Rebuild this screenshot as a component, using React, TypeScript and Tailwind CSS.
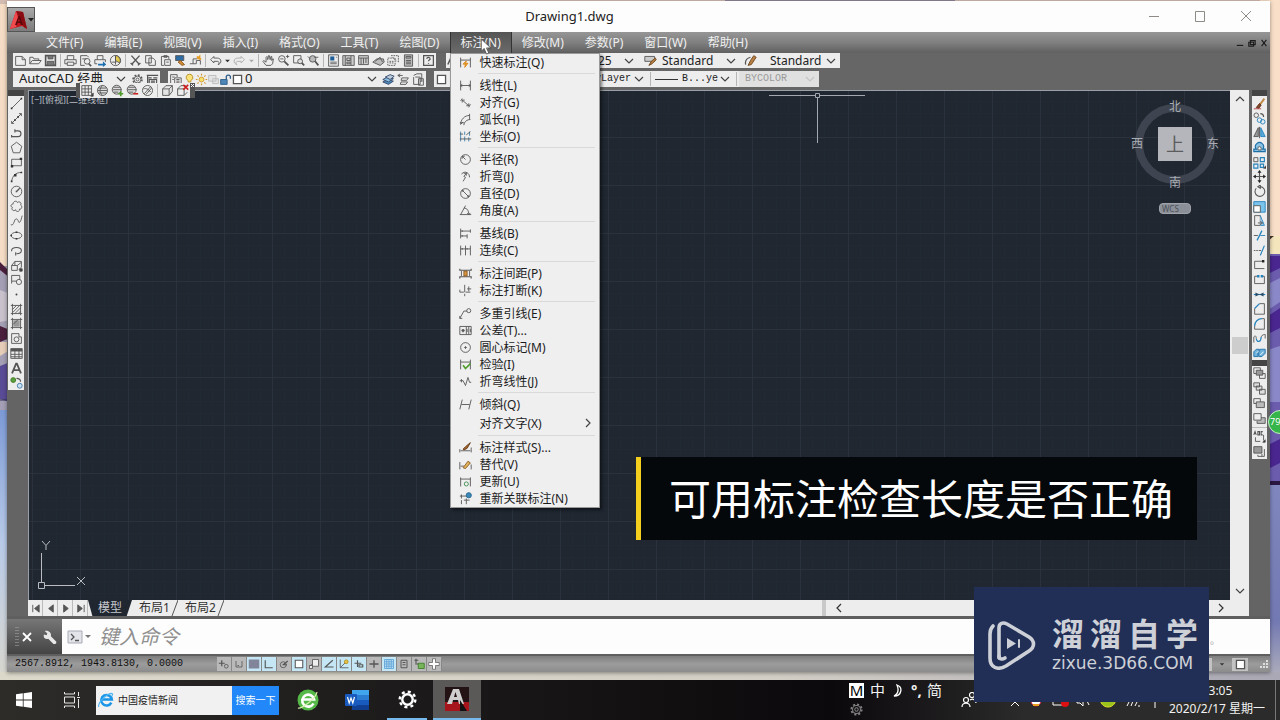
import React, { useState } from "react";

/* ---------- icon drawings, all on a 16 x 16 grid ---------- */

const drawings: Record<string, React.ReactNode> = {
  newFile: <path d="M2 3h8l4 4v7H2zM10 3v4h4" />,
  open: <path d="M1 12V4h4l1 2h6v2M1 12l3-4h11l-3 4z" />,
  save: (
    <>
      <path d="M2 2h12v12H2z" strokeWidth="2" />
      <path d="M5 2h6v4H5zM4 9h8v5H4z" fill="#777" />
    </>
  ),
  print: <path d="M4 7V2h8v5M4 12H1V7h14v5h-3M4 10h8v4H4z" />,
  preview: (
    <>
      <path d="M7 14H2V2h8l2 2M4 6h5" />
      <circle cx="10" cy="9" r="3.5" />
      <path d="M12 12l3 3" strokeWidth="2" />
    </>
  ),
  publish: (
    <>
      <path d="M4 7V2h7v5M4 12H1V7h13v3" />
      <path d="M5 12h6V9l4 4-4 3v-2H5z" fill="#1c6fb0" stroke="none" />
    </>
  ),
  dwf: (
    <>
      <circle cx="8" cy="8" r="6.3" />
      <path d="M8 8V2a6 6 0 0 1 5 9z" fill="#e2c94b" />
      <path d="M3 10h6M8 3v10" />
    </>
  ),
  cut: <path d="M3 2l9 10M13 2L4 12M2 11l3 3M11 14l3-3" strokeWidth="1.6" />,
  copy: <path d="M2 2h7v9H2zM6 5h5l3 3v6H6z" fill="#eee" />,
  paste: <path d="M3 3h9v3M3 3v11h3M6 2h4v2H6zM7 7h7v7H7zM9 10h3" />,
  matchProp: (
    <>
      <path d="M2 2h10v6H2z" fill="#2d6ca4" />
      <path d="M8 8l5 5-3 1-5-4z" fill="#d38b35" stroke="#8a5a1f" />
    </>
  ),
  block: (
    <>
      <path d="M1 12h8V8M5 12V6h5M9 8h5v5" />
      <path d="M10 3l1 2 2-2v3l2 0" stroke="#e39b22" strokeWidth="2" />
    </>
  ),
  undo: <path d="M6 3L2 7l4 4V9h4c3 0 3 3 1 4 5-1 5-8-1-8H6z" />,
  redo: <path d="M10 3l4 4-4 4V9H6c-3 0-3 3-1 4-5-1-5-8 1-8h4z" stroke="#aaa" />,
  tinyDown: <path d="M5 7h6l-3 3z" fill="#333" stroke="none" />,
  tinyDownOff: <path d="M5 7h6l-3 3z" fill="#aaa" stroke="none" />,
  pan: <path d="M5 14l-4-5 1-1 3 2V4l1-1 1 1v3l1-5h1l1 5 1-4h1v5l1-2h1l-1 6-2 2z" />,
  zoomRt: (
    <>
      <circle cx="6" cy="6" r="4" />
      <path d="M9 9l5 5" strokeWidth="2.2" />
      <path d="M11 3h4M13 1v4M4 6h4" />
    </>
  ),
  zoomWin: (
    <>
      <path d="M2 2h9v9H2z" />
      <circle cx="10" cy="9" r="3" fill="#ddd" />
      <path d="M12 11l3 3" strokeWidth="2.2" />
    </>
  ),
  zoomPrev: (
    <>
      <circle cx="7" cy="6" r="4" fill="#bbb" />
      <path d="M10 9l4 5" strokeWidth="2.2" />
      <path d="M1 3l3 3M9 4h5" />
    </>
  ),
  properties: (
    <>
      <path d="M2 1h12v14H2z" />
      <path d="M4 3h5v5H4z" fill="#1d5c96" stroke="none" />
      <path d="M4 10h8M4 12h8M11 4h1" />
    </>
  ),
  design: <path d="M1 2h14v12H1zM4 2v12M6 5h4v3H6zM11 2v12M6 10h4v2H6z" fill="#ccc" />,
  palette: <path d="M2 2h12v11H2zM2 5h12M5 5v8M8 5v7M11 5v6" fill="#ccc" />,
  sheet: <path d="M1 10l5-4h8l1 4-5 4zM4 9l6-5 3 6" fill="#bbb" />,
  markup: <path d="M1 5h9v9H1zM5 2h9v9M3 9h5M3 11h5M7 4l5 5" strokeDasharray="2 1" />,
  calc: (
    <>
      <path d="M3 1h10v14H3z" fill="#bbb" />
      <path d="M5 3h6v2H5zM5 8h6M5 10h6M5 12h6" />
    </>
  ),
  help: (
    <>
      <path d="M2 2h12v12H2z" strokeWidth="1.5" />
      <path d="M6 6c0-3 4-2 4 0 0 1-2 1-2 3M8 11v1" strokeWidth="1.5" />
    </>
  ),
  textStyle: <path d="M1 13L6 2l4 11M3 9h6M10 12l4-5" strokeWidth="1.8" />,
  dimBrush: (
    <>
      <path d="M1 3h12v6H1z" fill="#ccc" />
      <path d="M9 9l5-4 1 2-5 5-4 2z" fill="#b98045" stroke="#6b4318" />
    </>
  ),
  brush: (
    <>
      <path d="M8 8l4-6 3 2-4 6-2 3-4 1z" fill="#b98045" stroke="#6b4318" />
      <path d="M2 13c-1-5 2-8 6-9" strokeWidth="1.5" />
    </>
  ),
  gear: (
    <>
      <circle cx="8" cy="8" r="5.5" strokeWidth="2" strokeDasharray="2.2 2.1" />
      <circle cx="8" cy="8" r="4.2" />
      <circle cx="8" cy="8" r="1.8" />
    </>
  ),
  workspace: <path d="M1 3h14M3 6h4M9 6h5M4 8h9v6H4zM2 2v11M6 10h5M6 12h5" strokeWidth="1.5" />,
  layers: (
    <>
      <path d="M2 2h8v3M2 2v12h4M4 5h3M4 8h2" />
      <path d="M7 6h8v9H7zM9 8h4M9 10h4M9 12h4" />
    </>
  ),
  bulb: (
    <>
      <path d="M8 1.500a4 4 0 0 0-2 7.500l.5 2h3l.5-2a4 4 0 0 0-2-7.500z" fill="#fbe37a" stroke="#b58a1c" />
      <path d="M6.500 13h3M7 15h2" stroke="#666" />
    </>
  ),
  sun: (
    <>
      <circle cx="8" cy="8" r="3" fill="#f7e06a" stroke="#d1992b" />
      <path d="M8 1v2M8 13v2M1 8h2M13 8h2M3 3l1.500 1.500M11.500 11.500L13 13M3 13l1.500-1.500M11.500 4.500L13 3" stroke="#d1992b" strokeWidth="1.4" />
    </>
  ),
  vpFreeze: <path d="M2 3h9v7H2zM7 7h7v6H7z" stroke="#bbb" fill="#e4e4e4" />,
  unlock: (
    <>
      <path d="M9 8V4a3 3 0 0 1 5 0v3" stroke="#2f5d88" strokeWidth="1.6" />
      <path d="M2 8h8v6H2z" fill="#4b86b7" stroke="#2f5d88" />
    </>
  ),
  square: <path d="M3 3h10v10H3z" fill="#fff" strokeWidth="1.6" />,
  stack: (
    <>
      <path d="M1 11l6-3 7 2-6 4z" fill="#4f8fc0" stroke="#346" />
      <path d="M1 8l6-3 7 2-6 4z" fill="#8cc0e4" stroke="#346" />
      <path d="M4 5l6-3 5 2-5 4z" fill="#bcd" stroke="#346" />
    </>
  ),
  layerPrev: <path d="M1 3h6M4 1L1 3l3 2M6 6h8l-2 3H5zM5 11h8l-2 3H4z" />,
  layerState: <path d="M2 3l4-2h6v9M4 5h6v9H2V5M8 7h6v8H8zM10 10h3" />,
  cubeTable: (
    <>
      <path d="M1 2h12v12H1zM5 2v12M9 2v12M1 6h12M1 10h12" />
      <path d="M12 15h3v-4z" fill="#222" />
    </>
  ),
  sphere: (
    <>
      <circle cx="8" cy="8" r="6.200" fill="#ddd" />
      <path d="M2 8h12M3 5h10M3 11h10M8 2c-4 4-4 8 0 12" />
    </>
  ),
  spherePlus: (
    <>
      <circle cx="7" cy="7" r="5.500" fill="#ddd" />
      <path d="M2 7h11M3 4h8M3 10h6" />
      <path d="M12 9v6M9 12h6" stroke="#4c9a2a" strokeWidth="2" />
    </>
  ),
  sphereMinus: (
    <>
      <circle cx="7" cy="7" r="5.500" fill="#ddd" />
      <path d="M2 7h11M3 4h8M3 10h6" />
      <path d="M9 12h6" stroke="#c22" strokeWidth="2" />
    </>
  ),
  sphereEdit: (
    <>
      <circle cx="8" cy="8" r="6.200" />
      <path d="M4 12l8-9M6 13l7-8M3 6c3-1 6 0 9 4" />
    </>
  ),
  cube: <path d="M2 6l4-4h8v7l-4 5H2zM2 6h8l4-4M10 6v8" fill="#e4e4e4" />,
  cubeDelete: (
    <>
      <path d="M2 6l4-4h6M2 6v8h8l4-4M2 6h8v8M10 6l2-2" />
      <path d="M9 1l6 6M15 1L9 7" stroke="#c22" strokeWidth="2" />
    </>
  ),

  /* drawing tools */
  line: (
    <>
      <path d="M2 14L14 2" />
      <path d="M1 13h2v2H1zM13 1h2v2h-2z" fill="#333" stroke="none" />
    </>
  ),
  xline: (
    <>
      <path d="M2 14L14 2M2 11v3h3M11 2h3v3" />
      <path d="M5 9h2v2H5zM9 5h2v2H9z" fill="#333" stroke="none" />
    </>
  ),
  pline: <path d="M2 13h8a3.500 3.500 0 0 0 0-7H6M6 4v4M2 11v3" strokeWidth="1.4" />,
  polygon: <path d="M8 1.500l6.500 5-2.500 8H4l-2.500-8z" />,
  rect: (
    <>
      <path d="M2 4h12v8H2z" />
      <path d="M1 11h3v3H1zM12 2h3v3h-3z" fill="#333" stroke="none" />
    </>
  ),
  arc: (
    <>
      <path d="M2 14C3 7 7 3 14 3" />
      <path d="M1 13h2v2H1zM5 5h3v3H5zM13 2h2v2h-2z" fill="#333" stroke="none" />
    </>
  ),
  circle: (
    <>
      <circle cx="8" cy="8" r="6.500" />
      <path d="M8 8l4-4M7 8h2" strokeWidth="1.600" />
    </>
  ),
  revcloud: <path d="M4 5c-1-3 4-5 5-2 3-2 6 1 4 3 3 2 1 6-1 5 0 4-5 4-5 1-3 3-6-1-4-3-3-1-2-4 1-4z" />,
  spline: <path d="M1 13c4 3 4-8 7-7s2 6 4 4 2-5 3-8" />,
  ellipse: (
    <>
      <ellipse cx="8" cy="8" rx="6.500" ry="4" />
      <path d="M7 3h2v2H7zM0.500 7h2v2h-2zM7 11h2v2H7z" fill="#333" stroke="none" />
    </>
  ),
  ellipseArc: <path d="M2 8c0-5 12-5 12 0 0 3-3 4-6 4M7 10v4M2 7v2" strokeWidth="1.300" />,
  insertBlock: (
    <>
      <path d="M2 8l4-5h8v7l-3 3M2 8h7v6H2zM6 3v5M9 8l5-4" />
      <path d="M12 12h3v3h-3z" fill="#333" />
    </>
  ),
  makeBlock: (
    <>
      <path d="M2 3h10v7H2zM2 10v3" />
      <circle cx="11" cy="11" r="3.200" fill="#eee" />
    </>
  ),
  point: <circle cx="8" cy="8" r="1.200" fill="#444" stroke="none" />,
  hatch: <path d="M3 1v14M13 1v14M1 3h14M1 13h14M3 8l5-5M3 12l9-9M6 13l7-7M10 13l3-3" />,
  gradient: (
    <>
      <path d="M4 4h8v8H4z" fill="#999" stroke="none" />
      <path d="M3 1v14M13 1v14M1 3h14M1 13h14M4 9l6-6" />
    </>
  ),
  region: (
    <>
      <path d="M2 2h9v4h3v8H2z" />
      <circle cx="8" cy="9" r="3" />
    </>
  ),
  table: (
    <>
      <path d="M1 2h14v12H1zM1 9h14M1 12h14M6 2v12M11 2v12" />
      <path d="M1 2h14v3.500H1z" fill="#555" stroke="none" />
    </>
  ),
  mtext: <path d="M2.500 14L7.500 2h1l5 12M4.500 10h7" strokeWidth="2.200" />,
  addSelected: (
    <>
      <circle cx="4" cy="5" r="3" fill="#5c9e3d" stroke="#3c7a22" />
      <path d="M8 3c3 0 5 1 5 4" strokeWidth="1.400" />
      <circle cx="12" cy="12" r="3" fill="#cfe2f2" stroke="#3c79ad" />
    </>
  ),

  /* modify tools */
  erase: (
    <>
      <path d="M14 2L8 10" stroke="#c08846" strokeWidth="2.400" />
      <path d="M8 8l2 2-3 4-3-1z" fill="#8a4a2c" stroke="#5d2c18" />
      <path d="M1 14.500h9" stroke="#b44" />
    </>
  ),
  copyObj: (
    <>
      <circle cx="4" cy="4" r="2.800" />
      <path d="M9 2c3 0 4 1 4 4" strokeWidth="1.500" />
      <circle cx="8" cy="10" r="2.800" stroke="#2582bd" />
      <circle cx="12" cy="12" r="2.800" stroke="#2582bd" />
    </>
  ),
  mirror: (
    <>
      <path d="M6.500 2v11H1z" fill="#999" />
      <path d="M9.500 2v11H15z" fill="#57a8d8" stroke="#2582bd" />
      <path d="M8 1v14" />
    </>
  ),
  offset: (
    <>
      <path d="M1 13h14v-3h-3a5 5 0 1 0-8 0H1z" fill="#8ac2e4" stroke="#1d6fa8" strokeWidth="1.400" />
      <path d="M6 9a2 2 0 1 1 4 0v2H6z" fill="#fff" />
    </>
  ),
  array: (
    <>
      <path d="M1 2h5v5H1z" />
      <path d="M9 2h5v5H9zM1 10h5v5H1zM9 10h4v4H9z" stroke="#2582bd" strokeWidth="1.400" />
      <path d="M13 15h3v-3z" fill="#222" />
    </>
  ),
  move: (
    <>
      <path d="M8 2v12M2 8h12" strokeWidth="1.400" />
      <path d="M8 0l2.500 3.500h-5zM8 16l2.500-3.500h-5zM0 8l3.500-2.500v5zM16 8l-3.500-2.500v5z" fill="#222" stroke="none" />
    </>
  ),
  rotate: <path d="M9 2a6 6 0 1 1-5 2M9 0v4L6 2z" strokeWidth="1.300" />,
  scale: (
    <>
      <path d="M1 2h14v13H1z" fill="#7bc4ec" stroke="#2582bd" />
      <path d="M1 7h8v8H1z" fill="#fff" />
    </>
  ),
  stretch: (
    <>
      <path d="M2 2h7v12H2z" />
      <path d="M9 2l5 12H9" fill="#a8d4ef" stroke="#2582bd" />
      <path d="M6 11h5M9 9l3 2-3 2" />
    </>
  ),
  trim: (
    <>
      <path d="M1 8h5" />
      <path d="M9 8h6" stroke="#2582bd" />
      <path d="M11 2L5 14" stroke="#2582bd" strokeWidth="1.500" />
    </>
  ),
  extend: (
    <>
      <path d="M1 8h2M4 8h2M7 8h3" />
      <path d="M14 2L9 14" stroke="#2582bd" strokeWidth="1.500" />
    </>
  ),
  breakPt: (
    <>
      <path d="M13 4H2v9h12" />
      <path d="M11 2.500h3v3h-3z" fill="#222" stroke="none" />
    </>
  ),
  breakObj: (
    <>
      <path d="M5 4H2v9h12V4h-3" />
      <path d="M5 2.500h3v3H5zM9.500 2.500h3v3h-3z" fill="#2582bd" stroke="none" />
    </>
  ),
  join: (
    <>
      <path d="M1 8h14" stroke="#2582bd" strokeWidth="1.400" />
      <path d="M3 5.500L8 8l-5 2.500zM13 5.500L8 8l5 2.500z" fill="#2b4c66" stroke="none" />
    </>
  ),
  chamfer: (
    <>
      <path d="M2 8v7h12V2H8" />
      <path d="M2 8l6-6" stroke="#2582bd" strokeWidth="1.500" />
    </>
  ),
  fillet: (
    <>
      <path d="M2 11v4h12V2h-3" />
      <path d="M2 11c0-5 4-9 9-9" stroke="#2582bd" strokeWidth="1.500" />
    </>
  ),
  blend: (
    <>
      <path d="M1 13V6c2-2 3-1 3 2" />
      <path d="M4 8c1 6 6 4 6-2" stroke="#2582bd" strokeWidth="1.500" />
      <path d="M10 6c1-3 5-3 5-3v5" />
    </>
  ),
  explode: (
    <>
      <path d="M1 7l3-3h4l-2 4v5H1zM9 4h6v5l-4 4H7V8z" fill="#6fb2dc" stroke="#1d6fa8" />
      <path d="M4 9l3-3M9 11l4-4" stroke="#fff" />
    </>
  ),
  front: (
    <>
      <path d="M1 1h8v7H1zM8 8h7v6H8z" />
      <path d="M4 4h8v6H4z" fill="#999" />
    </>
  ),
  back: <path d="M4 5h7v5H4zM1 1h7v5H1zM8 9h7v6H8z" fill="#ddd" />,
  above: (
    <>
      <path d="M1 2h8v6H1z" />
      <path d="M4 6h10v7H4z" fill="#bbb" />
    </>
  ),
  under: (
    <>
      <path d="M7 7h8v7H5v-3" fill="#bbb" />
      <path d="M1 2h9v8H1z" fill="#eee" />
    </>
  ),
  textFront: (
    <>
      <path d="M1 6l1.500-4L4 6M6 2h2v4H6zM12 2h-2v4h2" strokeWidth="1.300" />
      <path d="M3 9v5h6M13 6v7" />
      <path d="M12 15h3v-3z" fill="#222" />
    </>
  ),
  hatchBack: (
    <>
      <path d="M1 2h10v8H1z" fill="#999" />
      <path d="M6 12v2h8V5M11 14v-3" />
    </>
  ),

  /* dimension menu */
  dQuick: (
    <>
      <path d="M2 2v12M14 2v12M2 5h12" />
      <path d="M9 6l-4 4h3l-1 4 4-5H8z" fill="#f0a52b" stroke="#d98512" />
    </>
  ),
  dLinear: <path d="M2 2v12M14 2v12M2 8h12M4 6.500L2 8l2 1.500M12 6.500L14 8l-2 1.500" />,
  dAligned: <path d="M4 3L2 6M4 5l8 7M14 10l-2 4M4 5v3M4 5h3M12 12V9M12 12H9" />,
  dArc: <path d="M2 14c0-6 5-11 11-11M6 15c0-4 4-7 8-7M1 12h5M13 1v7M2 14l3-3" />,
  dOrdinate: (
    <>
      <path d="M2 2v12M7 2v4M13 2v5M7 8v6M12 9v5" stroke="#3a7ca8" />
      <path d="M1 5h4M1 11h14M9 6l5-4" />
    </>
  ),
  dRadius: (
    <>
      <circle cx="8" cy="8" r="6" />
      <path d="M8 8L4 4M4 7V4h3" />
    </>
  ),
  dJog: <path d="M3 5c5-5 10-1 10 4M5 14l3-5-2-1 3-4M9 4L6 4M9 4v3" />,
  dDiameter: (
    <>
      <circle cx="8" cy="8" r="6" />
      <path d="M4 4l8 8M4 6V4h2M12 10v2h-2" />
    </>
  ),
  dAngular: <path d="M1 13h14M2 13L8 2M6 5c4 0 6 3 6 8M10 11l2 2 2-2" />,
  dBaseline: <path d="M2 2v12M2 5h12M14 3v4M2 11h8M10 9v5M4 4v2M4 10v2" />,
  dContinue: <path d="M2 2v12M8 2v12M14 2v12M2 6h12M4 5v2M10 5v2" />,
  dSpace: (
    <>
      <path d="M1 2v2h14V2M1 14v-2h14v2" strokeWidth="1.400" />
      <path d="M6 5h4v6H6z" fill="#d69345" stroke="#8a5a1f" />
      <path d="M3 5v6M13 5v6" />
    </>
  ),
  dBreak: <path d="M7 1v9M7 12v3M1 10h5M8 10h6M10 6h5M12 3v6M1 7v3" />,
  dLeader: (
    <>
      <circle cx="12" cy="4.500" r="2.500" />
      <path d="M1 14l5-9h4M1 11v3h3" />
    </>
  ),
  dTolerance: (
    <>
      <path d="M1 3h14v10H1zM9 3v10M12 3v10" />
      <path d="M3 8h4M5 6v4" strokeWidth="1.800" />
      <path d="M10 6v4M14 6v4" />
    </>
  ),
  dCenter: (
    <>
      <circle cx="8" cy="8" r="6" />
      <path d="M8 6.500v3M6.500 8h3" strokeWidth="1.300" />
    </>
  ),
  dInspect: (
    <>
      <path d="M2 2v12M14 2v12M2 5h12" />
      <path d="M5 9l3 4 6-6" stroke="#4f9d2d" strokeWidth="2" />
    </>
  ),
  dJogLine: <path d="M1 7h4l3 6 3-10 2 6h2M3 5v4" />,
  dOblique: <path d="M4 2L1 14M15 2l-3 12M3 8h10" />,
  dStyle: (
    <>
      <path d="M1 10v4M15 8v6M2 12h12" />
      <path d="M5 10l3-3 6-5-4 7-4 2z" fill="#a9662b" stroke="#5f3510" />
    </>
  ),
  dOverride: (
    <>
      <path d="M1 5v9M15 8v6M2 10h4" />
      <path d="M5 12l6-8 3 2-6 7z" fill="#e2b45b" stroke="#8a5a1f" />
    </>
  ),
  dUpdate: (
    <>
      <path d="M2 3v11M14 3v11M2 5h12" />
      <circle cx="9" cy="11" r="2.500" stroke="#3d8b50" />
    </>
  ),
  dReassoc: (
    <>
      <path d="M1 5h8M3 3v5M3 10v5M9 8v7M6 10h7" />
      <circle cx="12" cy="4" r="3.200" fill="#3d87b5" stroke="#25678f" />
    </>
  ),

  /* status toggles */
  infer: (
    <>
      <path d="M1 7h8M5 3v8" strokeWidth="1.600" />
      <circle cx="11" cy="11" r="2.500" />
    </>
  ),
  snap: <path d="M4 4v8h8V4M6 10h2" />,
  grid: <path d="M1 2h14v12H1z" fill="#82849a" stroke="none" />,
  ortho: <path d="M3 3v10h10" strokeWidth="1.500" />,
  polar: (
    <>
      <circle cx="7" cy="9" r="4" />
      <path d="M7 9l6-5M6 9h6" strokeWidth="1.500" />
    </>
  ),
  osnap: <path d="M3 3h10v10H3z" fill="#fff" strokeWidth="1.400" />,
  osnap3d: <path d="M6 2h8v9H6zM2 11l4-3M2 10v4h4v-4z" fill="#eee" />,
  otrack: <path d="M13 3L3 12h11" strokeWidth="1.500" />,
  ducs: (
    <>
      <path d="M3 2v11h11M3 13l7-7" />
      <circle cx="11" cy="5" r="2.500" fill="#e6c43f" stroke="#b58a1c" />
    </>
  ),
  dyn: <path d="M2 7h9M6 3v9M8 9h5v3H8z" strokeWidth="1.500" />,
  lwt: <path d="M2 8h12M8 3v10" strokeWidth="1.800" />,
  transparency: <path d="M2 2h12v12H2zM2 5h12M2 8h12M2 11h12M5 2v12M8 2v12M11 2v12" stroke="#5ba2d6" fill="#bfe0f5" />,
  quickProps: <path d="M4 3h8v10H4zM6 6h4M6 9h4" strokeWidth="1.300" />,
  cycling: (
    <>
      <path d="M2 3h5M4 1v6M3 8h5" strokeWidth="1.500" />
      <path d="M7 7h8v7H7z" fill="#76b65a" stroke="#3c7a22" />
    </>
  ),
  annotate: <path d="M6 1h4v5h5v4h-5v5H6v-5H1V6h5z" fill="#fff" stroke="#666" />,
};

function Icon({ name, className = "size-[13px]" }: { name: string; className?: string }) {
  return (
    <svg viewBox="0 0 16 16" fill="none" stroke="#555" strokeWidth="1.100" className={`shrink-0 ${className}`} aria-hidden="true">
      {drawings[name]}
    </svg>
  );
}

function Chevron({ className = "" }: { className?: string }) {
  return (
    <svg viewBox="0 0 10 10" fill="none" stroke="currentColor" strokeWidth="1.200" className={`size-2.5 shrink-0 ${className}`} aria-hidden="true">
      <path d="M1 3l4 4 4-4" />
    </svg>
  );
}

function ToolButton({ name, label, className = "w-[15px]" }: { name: string; label?: string; className?: string }) {
  return (
    <button type="button" aria-label={label ?? name} className={`flex items-center justify-center ${className}`}>
      <Icon name={name} />
    </button>
  );
}

const Divider = () => <span className="mx-0.5 my-px w-px bg-[#b5b5b5]" />;

function Dropdown({ label, value, className, disabled = false }: { label: string; value: string; className: string; disabled?: boolean }) {
  return (
    <label className={`flex items-center ${className} ${disabled ? "text-[#9a9a9a]" : "text-[#222]"}`}>
      <select aria-label={label} disabled={disabled} className="w-full min-w-0 appearance-none bg-transparent pr-3 outline-none">
        <option>{value}</option>
      </select>
      <Chevron className={disabled ? "-ml-2.5 text-[#c4c4c4]" : "-ml-2.5 text-[#444]"} />
    </label>
  );
}

/* ---------- data ---------- */

const menus = ["文件(F)", "编辑(E)", "视图(V)", "插入(I)", "格式(O)", "工具(T)", "绘图(D)", "标注(N)", "修改(M)", "参数(P)", "窗口(W)", "帮助(H)"];

const dimensionMenu: [string, string][][] = [
  [["dQuick", "快速标注(Q)"]],
  [["dLinear", "线性(L)"], ["dAligned", "对齐(G)"], ["dArc", "弧长(H)"], ["dOrdinate", "坐标(O)"]],
  [["dRadius", "半径(R)"], ["dJog", "折弯(J)"], ["dDiameter", "直径(D)"], ["dAngular", "角度(A)"]],
  [["dBaseline", "基线(B)"], ["dContinue", "连续(C)"]],
  [["dSpace", "标注间距(P)"], ["dBreak", "标注打断(K)"]],
  [["dLeader", "多重引线(E)"], ["dTolerance", "公差(T)..."], ["dCenter", "圆心标记(M)"], ["dInspect", "检验(I)"], ["dJogLine", "折弯线性(J)"]],
  [["dOblique", "倾斜(Q)"], ["", "对齐文字(X)"]],
  [["dStyle", "标注样式(S)..."], ["dOverride", "替代(V)"], ["dUpdate", "更新(U)"], ["dReassoc", "重新关联标注(N)"]],
];

const standardTools = [
  ["newFile", "open", "save"],
  ["print", "preview", "publish", "dwf"],
  ["cut", "copy", "paste", "matchProp", "block"],
  ["undo", "tinyDown", "redo", "tinyDownOff"],
  ["pan", "zoomRt", "zoomWin", "zoomPrev"],
  ["properties", "design", "palette", "sheet", "markup", "calc"],
  ["help"],
];

const drawTools = ["line", "xline", "pline", "polygon", "rect", "arc", "circle", "revcloud", "spline", "ellipse", "ellipseArc", "insertBlock", "makeBlock", "point", "hatch", "gradient", "region", "table", "mtext", "addSelected"];

const modifyTools = ["erase", "copyObj", "mirror", "offset", "array", "move", "rotate", "scale", "stretch", "trim", "extend", "breakPt", "breakObj", "join", "chamfer", "fillet", "blend", "explode"];

const toggles: [string, boolean][] = [
  ["infer", false], ["snap", false], ["grid", true], ["ortho", true], ["polar", false], ["osnap", true], ["osnap3d", false], ["otrack", true],
  ["ducs", true], ["dyn", true], ["lwt", false], ["transparency", true], ["quickProps", false], ["cycling", false], ["annotate", false],
];

/* ---------- window parts ---------- */

function Wallpaper() {
  return (
    <svg className="absolute inset-0 h-full w-full" viewBox="0 0 1280 720" preserveAspectRatio="none" aria-hidden="true">
      <defs>
        <linearGradient id="left" x1="0" y1="0" x2="0" y2="1">
          <stop offset="0" stopColor="#7d9ad6" />
          <stop offset="0.500" stopColor="#b9cbe8" />
          <stop offset="1" stopColor="#d9d7ce" />
        </linearGradient>
        <linearGradient id="right" x1="0" y1="0" x2="0" y2="1">
          <stop offset="0" stopColor="#7f87be" />
          <stop offset="0.700" stopColor="#7379b2" />
          <stop offset="1" stopColor="#b3b2bd" />
        </linearGradient>
        <linearGradient id="floor" x1="0" y1="0" x2="1" y2="0">
          <stop offset="0" stopColor="#dcd8ca" />
          <stop offset="0.600" stopColor="#d3cfc6" />
          <stop offset="1" stopColor="#a9a8b4" />
        </linearGradient>
      </defs>
      <rect width="1280" height="4" fill="#d2bcb2" />
      <path d="M725 0h230v4H725z" fill="#8e8594" />
      <rect y="4" width="20" height="262" fill="#f5dcc4" />
      <rect y="266" width="20" height="144" fill="#a49fb4" />
      <path d="M0 262l10 10v6l-10-8zM0 326l10 4v8l-10 4z" fill="#4a1f3c" />
      <path d="M0 290l10 4v26l-10 2z" fill="#c9c2cd" />
      <path d="M0 342h10v8l-10 6z" fill="#e6cdb8" />
      <path d="M0 366l10-4v40l-10-3z" fill="#5a4b96" />
      <path d="M0 400h8v10" fill="none" stroke="#2c3554" />
      <rect y="410" width="20" height="270" fill="url(#left)" />
      <rect x="1260" width="20" height="236" fill="#f9dfc8" />
      <rect x="1260" y="236" width="20" height="18" fill="#f4e5bd" />
      <path d="M1266 236h8l-6 5z" fill="#4a3530" />
      <rect x="1260" y="254" width="20" height="230" fill="#6b5cae" />
      <path d="M1268 256h12v12l-12 6zM1268 316l12-8v20l-12 6zM1268 445l12-6v24l-12 6z" fill="#4a2690" />
      <path d="M1268 284l12-6v24l-12 8zM1268 350l12-4v56h-12z" fill="#8a88c8" />
      <rect x="1260" y="484" width="20" height="196" fill="url(#right)" />
      <path d="M1268 481h12v4h-12z" fill="#2b1842" />
      <rect y="672" width="1280" height="10" fill="url(#floor)" />
    </svg>
  );
}

function TitleBar() {
  return (
    <header className="flex h-[31px] shrink-0 bg-[#fdfdfd]">
      <button type="button" aria-label="应用程序菜单" className="mt-1.5 flex w-7 items-center border border-[#555] bg-linear-to-b from-[#a9a9a9] to-[#7c7c7c] pl-0.5">
        <svg viewBox="0 0 18 20" className="h-5 w-[18px]" aria-hidden="true">
          <path d="M0 19L6 1l7 1 4 17-5-3z" fill="#c0151d" />
          <path d="M6 1l7 1 4 17-3-2z" fill="#8a0c13" />
          <path d="M0 19L6 1l2 7-2 9z" fill="#ef4b4f" />
          <path d="M5 15l3.500-9h1.500L13 15h-2.200l-.6-2H7.500L7 15zM8 11.500h1.800L9 8.500z" fill="#5c070b" />
        </svg>
        <svg viewBox="0 0 6 4" className="h-1 w-1.5" aria-hidden="true">
          <path d="M0 0h6L3 3.500z" fill="#222" />
        </svg>
      </button>
      <h1 className="flex-1 pr-[40px] pt-1.5 text-center text-[13px] leading-[19px] text-[#222]">Drawing1.dwg</h1>
      <div className="flex items-center gap-[26px] pr-3.5 text-[#8e8a86]">
        <button type="button" aria-label="最小化" className="size-5 p-1">
          <svg viewBox="0 0 12 12" fill="none" stroke="currentColor" className="size-3"><path d="M1 5.500h10" /></svg>
        </button>
        <button type="button" aria-label="最大化" className="size-5 p-1">
          <svg viewBox="0 0 12 12" fill="none" stroke="currentColor" className="size-3"><path d="M1.500 0.500h9v10h-9z" /></svg>
        </button>
        <button type="button" aria-label="关闭" className="size-5 p-1">
          <svg viewBox="0 0 12 12" fill="none" stroke="currentColor" className="size-3"><path d="M1 0l10 10M11 0L1 10" /></svg>
        </button>
      </div>
    </header>
  );
}

function DimensionMenu() {
  return (
    <ul role="menu" className="absolute left-0 top-full z-20 w-[150px] border border-[#9a9a9a] bg-[#efeff0] text-xs text-[#1c1c1c] shadow-[2px_2px_3px_rgba(0,0,0,0.5)]">
      {dimensionMenu.map((group, g) => (
        <li key={g} role="none">
          {g > 0 && <div className="my-0.5 ml-[27px] mr-1 h-0.5 border-t border-[#d9d9d9]" />}
          <ul role="none">
            {group.map(([icon, text]) => (
              <li key={text} role="none">
                <button type="button" role="menuitem" className={`flex w-full items-center gap-1.5 pl-2 pr-1.5 text-left leading-[17px] ${icon ? "h-[17px]" : "h-5"}`}>
                  <span className="flex w-3.5">{icon && <Icon name={icon} />}</span>
                  <span className="flex-1 whitespace-nowrap">{text}</span>
                  {!icon && <Chevron className="-rotate-90 text-[#444]" />}
                </button>
              </li>
            ))}
          </ul>
        </li>
      ))}
    </ul>
  );
}

function MenuBar() {
  return (
    <nav className="flex h-[21px] shrink-0 items-stretch bg-linear-to-b from-[#969696] via-[#808080] to-[#606060] pl-[29px] text-xs text-[#f0f0f0]">
      {menus.map((text) => {
        const open = text === "标注(N)";
        return (
          <div key={text} className="relative flex">
            <button type="button" aria-haspopup="menu" aria-expanded={open} className={`whitespace-nowrap border-x pl-[9px] pr-2.5 ${open ? "border-[#333] bg-linear-to-b from-[#555] to-[#6a6a6a]" : "border-transparent"}`}>
              {text}
            </button>
            {open && <DimensionMenu />}
            {open && (
              <svg viewBox="0 0 12 18" className="absolute left-[30px] top-1.5 z-30 h-[17px] w-3" aria-hidden="true">
                <path d="M1 1v13l3-3 2.500 6 2.500-1-2.500-5.500H11z" fill="#fff" stroke="#444" strokeWidth="0.800" />
              </svg>
            )}
          </div>
        );
      })}
      <div className="ml-auto flex items-center gap-1 pr-0.5">
        {["M1 8h8", "M3 2h6v5H3zM1 4h6v5H1z", "M2 1l6 8M8 1L2 9"].map((d, i) => (
          <button key={d} type="button" aria-label={["最小化图形", "还原图形", "关闭图形"][i]}>
            <svg viewBox="0 0 10 10" fill="none" stroke="#1b1b1b" strokeWidth="1.400" className="size-2"><path d={d} /></svg>
          </button>
        ))}
      </div>
    </nav>
  );
}

function Toolbars() {
  return (
    <div className="relative shrink-0 bg-[#666] pb-[3px] pl-1.5 text-xs text-[#222]">
      <div className="flex h-[18px] gap-2.5 overflow-hidden pb-[3px]">
        <div className="flex bg-[#ededed]">
          {standardTools.map((group, g) => (
            <React.Fragment key={g}>
              {g > 0 && <Divider />}
              {group.map((name) => (
                <ToolButton key={name} name={name} className={name.startsWith("tiny") ? "w-[9px]" : "w-[15px]"} />
              ))}
            </React.Fragment>
          ))}
        </div>
        <div className="flex bg-[#ededed]">
          <ToolButton name="textStyle" label="文字样式" />
          <Dropdown label="文字样式" value="Standard" className="w-[88px] pl-1 pr-1" />
          <ToolButton name="dimBrush" label="标注样式管理器" />
          <Dropdown label="标注样式" value="ISO-25" className="w-[76px] pl-2.5 pr-1.5" />
          <ToolButton name="dimBrush" label="表格样式管理器" className="w-5" />
          <Dropdown label="表格样式" value="Standard" className="w-20 pl-0.5 pr-1" />
          <ToolButton name="brush" label="多重引线样式管理器" className="w-5" />
          <Dropdown label="多重引线样式" value="Standard" className="w-20 pl-2.5 pr-1" />
        </div>
      </div>
      <div className="flex h-4 gap-2 overflow-hidden">
        <div className="flex bg-[#ededed]">
          <Dropdown label="工作空间" value="AutoCAD 经典" className="w-[117px] pl-1.5 pr-1 text-[13px]" />
          <ToolButton name="gear" label="工作空间设置" />
          <ToolButton name="workspace" label="我的工作空间" />
        </div>
        <div className="flex bg-[#ededed]">
          <ToolButton name="layers" label="图层特性管理器" />
          {["bulb", "sun", "vpFreeze", "unlock", "square"].map((name) => (
            <ToolButton key={name} name={name} className="w-3" />
          ))}
          <Dropdown label="图层" value="0" className="w-[138px] pl-0.5 pr-1 text-[13px]" />
          <ToolButton name="stack" label="将对象的图层设为当前" />
          <ToolButton name="layerPrev" label="上一个图层" />
          <ToolButton name="layerState" label="图层状态管理器" />
        </div>
        <div className="flex bg-[#ededed] font-['Liberation_Mono','Noto_Sans_CJK_SC',monospace] text-[10px]">
          <ToolButton name="square" label="颜色" />
          <Dropdown label="对象颜色" value="ByLayer" className="w-[84px] pl-0.5 pr-1" />
          <Divider />
          <span className="ml-1 mt-2 w-4 border-t border-[#333]" />
          <Dropdown label="线型" value="ByLayer" className="w-[90px] pl-[31px] pr-1" />
          <Divider />
          <span className="ml-0.5 mt-2 w-[23px] border-t border-[#333]" />
          <Dropdown label="线宽" value="B...ye" className="w-14 pl-1 pr-1" />
          <Divider />
          <Dropdown label="打印样式" value="BYCOLOR" disabled className="w-20 bg-[#e0e0e0] pl-1.5 pr-1" />
        </div>
      </div>
      <div className="absolute left-[69px] top-[30px] z-10 flex h-[15px] border-l-4 border-[#555] bg-[#ededed]">
        {["cubeTable", "sphere", "spherePlus", "sphereMinus", "sphereEdit"].map((name) => (
          <ToolButton key={name} name={name} />
        ))}
        <Divider />
        <ToolButton name="cube" />
        <ToolButton name="cubeDelete" />
        <button type="button" aria-label="关闭工具栏" className="flex h-full w-[5px] items-start bg-[#555]">
          <svg viewBox="0 0 5 5" fill="none" stroke="#fff" className="size-[5px]"><path d="M1 1l3 3M4 1L1 4" /></svg>
        </button>
      </div>
    </div>
  );
}

function ViewCube() {
  return (
    <div className="absolute right-[11px] top-2 flex w-[88px] flex-col items-center text-xs text-[#a9adb3]">
      <div className="relative flex h-[90px] w-full items-center justify-between">
        <svg viewBox="0 0 88 90" className="absolute inset-0 h-full w-full" aria-hidden="true">
          <circle cx="44" cy="45" r="36" fill="none" stroke="#3f4550" strokeWidth="8" />
        </svg>
        <span className="relative">西</span>
        <button type="button" className="relative size-[34px] bg-[#b4b6bb] text-lg text-[#5c5c5c]">上</button>
        <span className="relative">东</span>
        <span className="absolute inset-x-0 top-0 text-center leading-4">北</span>
        <span className="absolute inset-x-0 bottom-0 text-center leading-3">南</span>
      </div>
      <button type="button" className="mt-3.5 w-8 rounded-sm border border-[#a0a4aa] bg-[#8b9098] pl-0.5 text-left text-[8px] leading-[9px] text-[#4c5159]">WCS</button>
    </div>
  );
}

function Canvas() {
  return (
    <main className="relative min-w-0 flex-1 overflow-hidden border-l border-t border-[#9aa0a8] bg-[#202731] bg-[linear-gradient(to_right,#2a323d_1px,transparent_1px),linear-gradient(to_bottom,#2a323d_1px,transparent_1px),linear-gradient(to_right,#212933_1px,transparent_1px),linear-gradient(to_bottom,#212933_1px,transparent_1px)] bg-size-[48px_48px,48px_48px,12px_12px,12px_12px] bg-position-[3px_0,0_46px,3px_0,0_46px]">
      <p className="ml-0.5 mt-1 text-[9px] leading-[10px] text-[#b9bdc2]">[−][俯视][二维线框]</p>
      <svg viewBox="0 0 96 52" fill="none" stroke="#a3a8b0" className="absolute left-[740px] top-0 h-[52px] w-24" aria-hidden="true">
        <path d="M0 4.500h46M50 4.500h46M48.500 7v45M46.500 2.500h4v4h-4z" />
      </svg>
      <ViewCube />
      <svg viewBox="0 0 60 50" fill="none" stroke="#b9bdc2" className="absolute bottom-[9px] left-2 h-[50px] w-[60px]" aria-hidden="true">
        <path d="M4.500 12v30M7 44.500h31M1.500 41.500h6v6h-6zM5 0l4 4.500L13 0M9 4.500V9M40 36l8 8M48 36l-8 8" />
      </svg>
    </main>
  );
}

function LayoutTabs() {
  return (
    <div className="flex h-4 shrink-0 items-stretch bg-[#ededed] text-xs text-[#333]">
      {["M3 2v8M10 2v8L5 6z", "M9 2v8L4 6z", "M4 2v8l5-4z", "M10 2v8M3 2v8l5-4z"].map((d, i) => (
        <button key={d} type="button" aria-label={["第一个", "上一个", "下一个", "最后一个"][i]} className="flex w-[15px] items-center justify-center border-r border-[#bbb]">
          <svg viewBox="0 0 12 12" fill="#555" stroke="#555" className="size-[11px]"><path d={d} /></svg>
        </button>
      ))}
      <button type="button" className="w-11 bg-[#202731] leading-4 text-[#c6c9cd] [clip-path:polygon(0_0,100%_0,88%_100%,10%_100%)]">模型</button>
      {["布局1", "布局2"].map((text) => (
        <button key={text} type="button" className="flex w-[46px] items-center justify-between pl-[7px] leading-4">
          {text}
          <svg viewBox="0 0 7 16" fill="none" stroke="#555" className="h-4 w-[7px]"><path d="M7 0L1 16" /></svg>
        </button>
      ))}
      <div className="flex min-w-0 flex-1 justify-end">
        <div className="flex w-[408px] items-center justify-between border-l-4 border-[#c9c9c9] pl-2 pr-1 text-[#333]">
          <button type="button" aria-label="向左滚动"><Chevron className="rotate-90" /></button>
          <button type="button" aria-label="向右滚动"><Chevron className="-rotate-90" /></button>
        </div>
        <span className="w-[19px]" />
      </div>
    </div>
  );
}

function WorkArea() {
  return (
    <div className="flex min-h-0 flex-1 bg-[#646464]">
      <aside className="flex w-[21px] shrink-0 flex-col pl-px pr-1">
        <span className="h-1.5 bg-[#444]" />
        <div className="flex h-[294px] flex-col bg-[#ededed]">
          {drawTools.map((name) => (
            <ToolButton key={name} name={name} className="min-h-0 w-full flex-1" />
          ))}
        </div>
      </aside>
      <div className="flex min-w-0 flex-1 flex-col">
        <div className="flex min-h-0 flex-1">
          <Canvas />
          <div className="flex w-[19px] shrink-0 flex-col items-center bg-[#ededed] py-1 text-[#444]">
            <button type="button" aria-label="向上滚动"><Chevron className="rotate-180" /></button>
            <span className="flex-1" />
            <span className="h-[17px] w-4 bg-[#cdcdcd]" />
            <span className="flex-1" />
            <button type="button" aria-label="向下滚动"><Chevron /></button>
          </div>
        </div>
        <LayoutTabs />
      </div>
      <aside className="flex w-[21px] shrink-0 flex-col pl-[3px] pr-[3px]">
        <span className="h-1.5 bg-[#444]" />
        <div className="flex h-[264px] flex-col bg-[#ededed]">
          {modifyTools.map((name) => (
            <ToolButton key={name} name={name} className="min-h-0 w-full flex-1" />
          ))}
        </div>
        <span className="h-1.5 bg-[#444]" />
        <div className="flex flex-col bg-[#ededed]">
          {["front", "back", "above", "under"].map((name) => (
            <ToolButton key={name} name={name} className="h-[15px] w-full" />
          ))}
          <span className="my-px h-px bg-[#bbb]" />
          {["textFront", "hatchBack"].map((name) => (
            <ToolButton key={name} name={name} className="h-[15px] w-full" />
          ))}
        </div>
      </aside>
    </div>
  );
}

function CommandLine() {
  const [command, setCommand] = useState("");
  return (
    <div className="flex h-10 shrink-0 bg-[#5f5f5f] pb-0.5 pt-[3px]">
      <div className="flex w-[55px] shrink-0 items-center bg-linear-to-b from-[#777] to-[#444] pl-2">
        <svg viewBox="0 0 4 20" className="h-5 w-1" aria-hidden="true"><path d="M1 0v20M3 0v20" stroke="#aaa" strokeDasharray="1 2" /></svg>
        <button type="button" aria-label="关闭命令行" className="ml-0.5">
          <svg viewBox="0 0 12 12" stroke="#fff" strokeWidth="1.800" className="size-3"><path d="M2 2l8 8M10 2l-8 8" /></svg>
        </button>
        <button type="button" aria-label="自定义" className="ml-2.5">
          <svg viewBox="0 0 16 16" className="size-3.5"><path d="M2 1l3 3-1 2-3-1c-1 4 2 6 5 5l6 6c2 1 4-1 3-3L9 7c1-4-3-7-7-6z" fill="#e9e9e9" /></svg>
        </button>
      </div>
      <label className="flex flex-1 items-center bg-[#fdfdfd] pl-[5px]">
        <svg viewBox="0 0 16 16" fill="none" className="size-4" aria-hidden="true">
          <path d="M1 2h14v12H1z" fill="#e3e4ea" stroke="#a9abb5" />
          <path d="M4 5l3 3-3 3M8 11.500h4" stroke="#555" strokeWidth="1.300" />
        </svg>
        <svg viewBox="0 0 6 4" className="ml-0.5 h-1 w-1.5" aria-hidden="true"><path d="M0 0h6L3 3z" fill="#777" /></svg>
        <input
          aria-label="命令"
          value={command}
          onChange={(e) => setCommand(e.target.value)}
          placeholder="键入命令"
          className="ml-2 min-w-0 flex-1 bg-transparent text-xl italic outline-none placeholder:text-[#8f8f8f]"
        />
        <span className="pr-[50px] pt-2 text-[10px] text-[#999]">。</span>
      </label>
    </div>
  );
}

function StatusBar() {
  return (
    <footer className="flex h-4 shrink-0 items-center bg-linear-to-b from-[#7e7e7e] via-[#9c9c9c] to-[#8c8c8c] pl-2">
      <output className="w-[202px] whitespace-pre font-['Liberation_Mono',monospace] text-[10px] leading-4 text-[#111]">2567.8912, 1943.8130, 0.0000</output>
      {toggles.map(([name, on]) => (
        <button key={name} type="button" aria-label={name} aria-pressed={on} className={`flex h-3.5 w-[15px] items-center justify-center border-r border-[#888] ${on ? "bg-[#c4e6f5]" : "bg-[#b9b9b9]"}`}>
          <Icon name={name} className="size-3" />
        </button>
      ))}
      <div className="ml-auto flex items-center gap-1 pr-0.5">
        <button type="button" aria-label="隔离对象" className="flex w-4 justify-center bg-[#c2c2c2]"><Icon name="bulb" /></button>
        <Icon name="tinyDown" className="size-3" />
        <button type="button" aria-label="全屏显示" className="flex w-4 justify-center bg-[#c2c2c2]"><Icon name="square" /></button>
        <svg viewBox="0 0 8 8" className="ml-2 size-2" aria-hidden="true"><path d="M6 0h2v2H6zM3 3h2v2H3zM6 3h2v2H6zM0 6h2v2H0zM3 6h2v2H3zM6 6h2v2H6z" fill="#ddd" /></svg>
      </div>
    </footer>
  );
}

function Taskbar() {
  return (
    <footer className="relative flex h-10 shrink-0 items-center bg-linear-to-r from-[#2e2c29] via-[#0c090c] via-65% to-[#2b2b2b] to-80% text-[#f2f2f2]">
      <button type="button" aria-label="开始" className="ml-4">
        <svg viewBox="0 0 16 16" fill="#fff" className="size-4"><path d="M0 2.200L6.800 1.300v6.300H0zM7.600 1.200L16 0v7.600H7.600zM0 8.400h6.800v6.300L0 13.800zM7.600 8.400H16V16l-8.400-1.200z" /></svg>
      </button>
      <button type="button" aria-label="任务视图" className="ml-8">
        <svg viewBox="0 0 16 16" fill="none" stroke="#e8e8e8" className="size-4"><path d="M0.500 0v2h10V0M0.500 5h10v6H0.500zM0.500 16v-2h10v2M14.500 0v4M14.500 7v9M13 5.500h3" /></svg>
      </button>
      <form className="ml-4 flex h-[29px]" onSubmit={(e) => e.preventDefault()}>
        <label className="flex w-[136px] items-center gap-1 bg-[#f1f1f1] pl-0.5">
          <svg viewBox="0 0 18 18" fill="none" className="size-4 shrink-0" aria-hidden="true">
            <path d="M15 12a6 6 0 1 1 .6-3.500H5" stroke="#1a95e8" strokeWidth="2.800" />
            <path d="M1 17C-1 13 9 2 15 1.500c2 0 1.500 2 .5 3" stroke="#4db5f3" strokeWidth="1.300" />
          </svg>
          <input aria-label="搜索" defaultValue="中国疫情新闻" className="w-full min-w-0 bg-transparent text-[10px] text-[#222] outline-none" />
        </label>
        <button type="submit" className="w-[47px] whitespace-nowrap bg-[#2287f8] text-[10px] text-white">搜索一下</button>
      </form>
      <button type="button" aria-label="浏览器" className="ml-[18px]">
        <svg viewBox="0 0 22 22" fill="none" className="size-[22px]">
          <circle cx="11" cy="11" r="10.500" fill="#55b947" />
          <path d="M16.500 14.500a6 6 0 1 1 .6-4H6" stroke="#fff" strokeWidth="2.600" />
          <path d="M1 19C4 20 19 10 20 3" stroke="#d8efb0" strokeWidth="1.200" />
        </svg>
      </button>
      <button type="button" aria-label="Word" className="ml-[26px]">
        <svg viewBox="0 0 24 20" className="h-5 w-6">
          <rect x="7" width="17" height="20" rx="1.500" fill="#2b7cd3" />
          <path d="M7 0h17v5H7z" fill="#41a5ee" />
          <path d="M7 10h17v5H7z" fill="#185abd" />
          <path d="M7 15h17v5H7z" fill="#103f91" />
          <rect y="4" width="12" height="12" rx="1" fill="#185abd" />
          <path d="M2.500 7l1.700 6L6 8l1.800 5L9.500 7" fill="none" stroke="#fff" strokeWidth="1.200" />
        </svg>
      </button>
      <button type="button" aria-label="设置" className="ml-[18px] flex h-full w-10 items-center justify-center border-b-2 border-[#76b9ed]">
        <svg viewBox="0 0 20 20" fill="none" stroke="#fff" className="size-[19px]">
          <circle cx="10" cy="10" r="5.500" strokeWidth="2.600" />
          <circle cx="10" cy="10" r="8.200" strokeWidth="2.600" strokeDasharray="3.200 3.240" />
        </svg>
      </button>
      <button type="button" aria-label="AutoCAD" className="ml-1.5 flex h-full w-12 items-center justify-center border-b-2 border-[#76b9ed] bg-[#5b5958]">
        <svg viewBox="0 0 24 24" className="size-6">
          <path d="M0 0h24v24H0z" fill="#241315" />
          <path d="M0 15h24v9H0z" fill="#a5151b" />
          <path d="M2 17L8 2h6l5 15h-5l-1-4H8l-1 4zM9 10h3l-1.500-5z" fill="#cfcfcf" />
          <path d="M15 24V13l7 11z" fill="#111" />
        </svg>
      </button>

      <div className="ml-auto flex h-full">
        <div className="flex w-[112px] flex-col pt-[3px]">
          <div className="flex items-center gap-1.5 text-[15px] leading-[15px]">
            <span className="w-[15px] bg-white text-center text-black">M</span>
            <span>中</span>
            <svg viewBox="0 0 14 14" fill="none" stroke="#fff" strokeWidth="1.300" className="size-3.5" aria-hidden="true"><path d="M6 1c6 2 5 11-3 11 4-2 5-6 3-11z" /></svg>
            <span className="w-2.5 font-bold">°,</span>
            <span>简</span>
          </div>
          <Icon name="gear" className="mt-1 size-[15px] brightness-150 invert" />
        </div>
        <svg viewBox="0 0 16 16" fill="none" stroke="#fff" strokeWidth="1.200" className="mt-3 size-4" aria-label="人脉">
          <circle cx="5" cy="8" r="2.500" />
          <circle cx="11" cy="3" r="2.500" />
          <path d="M1 15c0-5 8-5 8 0M9 8c3-2 6 0 6 3" />
        </svg>
        <svg viewBox="0 0 180 12" fill="none" stroke="#fff" className="ml-2 mt-[17px] h-3 w-[180px]" aria-hidden="true">
          <path d="M26 9l4-4 4 4" />
          <circle cx="51" cy="4" r="5" fill="#fff" stroke="#b13" />
          <path d="M48 8h6" stroke="#e9a020" strokeWidth="2" />
          <path d="M68 1h14v7H68z" />
          <circle cx="80" cy="6" r="4" fill="#d11" stroke="none" />
          <path d="M92 3h3l3-3v9l-3-3h-3zM102 4l2 4" />
          <path d="M115 0h16c0 6-3 10-8 10s-8-4-8-10z" fill="#9bc31c" stroke="#e6e02c" />
          <path d="M142 9l2-4M146 9l2-5M150 9l2-4M154 8v2M170 3v8" />
        </svg>
        <div className="flex w-[104px] flex-col items-center pt-0.5 text-xs leading-[18px]">
          <time>13:05</time>
          <time className="whitespace-nowrap">2020/2/17 星期一</time>
        </div>
        <span className="ml-1.5 mr-1 w-px bg-[#777]" />
      </div>
    </footer>
  );
}

function Caption() {
  return (
    <p className="absolute bottom-[180px] right-[83px] z-30 whitespace-nowrap border-l-[5px] border-[#f5cf1d] bg-[#05080b] py-[11px] pl-7 pr-6 text-[42px] leading-[61px] text-white">
      可用标注检查长度是否正确
    </p>
  );
}

function SiteBadge() {
  return (
    <div className="absolute bottom-[18px] right-[71px] z-30 flex h-[115px] w-[235px] items-center gap-4 bg-[#212f57] pl-3.5 text-[#cdd0d6]">
      <svg viewBox="0 0 48 50" fill="none" stroke="currentColor" strokeWidth="3.600" strokeLinecap="round" className="h-[50px] w-12 shrink-0" aria-hidden="true">
        <path d="M11 38V8c0-5 4-6 8-4l22 13c6 4 6 10 0 14L18 46C9 51 2 47 2 38V14c0-4 1-6 3-8" />
        <path d="M11 36c0 3 3 4 6 2" />
        <path d="M19 18v11l9-5.500z" fill="currentColor" stroke="none" />
        <path d="M31 20v7" strokeWidth="2" />
      </svg>
      <div className="pt-0.5">
        <p className="flex gap-1.5 text-[32px] font-bold leading-[34px]">
          {["溜", "溜", "自", "学"].map((c, i) => (
            <span key={i}>{c}</span>
          ))}
        </p>
        <p className="font-['DejaVu_Sans',sans-serif] text-[17px] leading-6">zixue.3D66.COM</p>
      </div>
    </div>
  );
}

export default function App() {
  return (
    <div className="relative flex h-screen min-h-[640px] flex-col overflow-hidden font-['Noto_Sans','Noto_Sans_CJK_SC',sans-serif]">
      <Wallpaper />
      <div className="relative mb-2 ml-[7px] mr-2.5 mt-px flex min-h-0 flex-1 flex-col bg-[#666] shadow-[0_1px_4px_rgba(0,0,0,0.4)]">
        <TitleBar />
        <MenuBar />
        <Toolbars />
        <WorkArea />
        <CommandLine />
        <StatusBar />
      </div>
      <Taskbar />
      <div className="absolute -right-3 top-[410px] z-20 flex size-6 items-center rounded-full border border-[#c9efc9] bg-[#35b54a] pl-px text-[9px] text-white">79</div>
      <Caption />
      <SiteBadge />
    </div>
  );
}
